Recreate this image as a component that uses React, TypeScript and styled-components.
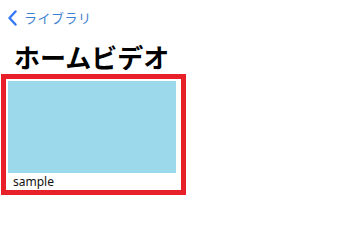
import React from 'react';
import styled, { createGlobalStyle } from 'styled-components';

const GlobalStyle = createGlobalStyle`
  body {
    margin: 0;
    background: #ffffff;
    font-family: 'Noto Sans CJK JP', 'Noto Sans', sans-serif;
  }
`;

const Screen = styled.div`
  width: 340px;
  height: 246px;
  display: flex;
  flex-direction: column;
  align-items: flex-start;
`;

const NavBar = styled.div`
  display: flex;
  align-items: center;
  gap: 6px;
  padding: 9px 0 0 7px;
  height: 18px;
  color: #3f7fd0;
`;

const BackLabel = styled.span`
  font-size: 13px;
  line-height: 18px;
  letter-spacing: 0.5px;
`;

const Title = styled.h1`
  margin: 14px 0 0 14px;
  font-size: 26px;
  line-height: 32px;
  font-weight: 700;
  color: #000000;
`;

const Card = styled.div`
  margin: 1px 0 0 1px;
  width: 168px;
  border: 5px solid #e8202a;
  padding: 2px 5px 0 2px;
  box-sizing: content-box;
  display: flex;
  flex-direction: column;
`;

const Thumb = styled.div`
  width: 168px;
  height: 92px;
  background: #9cd9ea;
`;

const Caption = styled.div`
  font-family: 'Noto Sans', sans-serif;
  font-size: 12px;
  line-height: 17px;
  padding-left: 5px;
  color: #111111;
`;

const App: React.FC = () => (
  <Screen>
    <GlobalStyle />
    <NavBar>
      <svg width="11" height="16" viewBox="0 0 11 16">
        <path d="M8.5 1.5 L2.5 8 L8.5 14.5" fill="none" stroke="#3478f6" strokeWidth="2.4" strokeLinecap="round" strokeLinejoin="round" />
      </svg>
      <BackLabel>ライブラリ</BackLabel>
    </NavBar>
    <Title>ホームビデオ</Title>
    <Card>
      <Thumb />
      <Caption>sample</Caption>
    </Card>
  </Screen>
);

export default App;
